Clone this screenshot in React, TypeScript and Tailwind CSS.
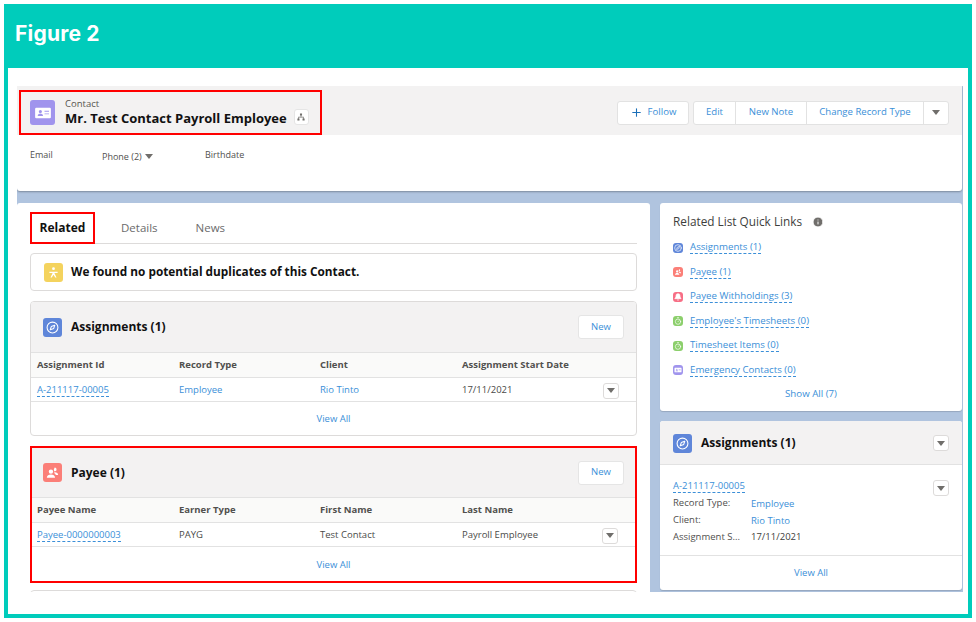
import React from "react";
import { Compass, Timer, Bell, Plus, Info } from "lucide-react";

const font = { fontFamily: '"Open Sans", "Noto Sans", sans-serif' };

function Caret({ className = "" }: { className?: string }) {
  return (
    <svg viewBox="0 0 10 6" className={`w-[8px] h-[5px] ${className}`}>
      <path d="M0 0h10L5 6z" fill="#706e6b" />
    </svg>
  );
}

function IdCard({ className = "" }: { className?: string }) {
  return (
    <svg viewBox="0 0 24 24" className={className}>
      <path fillRule="evenodd" fill="white" d="M3 5h18a1.500 1.500 0 011.500 1.500v11a1.500 1.500 0 01-1.500 1.500H3a1.500 1.500 0 01-1.500-1.500v-11A1.500 1.500 0 013 5zm5.500 3a2 2 0 100 4.200 2 2 0 000-4.200zM5 15.500c0-1.500 1.600-2.400 3.500-2.400s3.500.9 3.500 2.400v.5H5zM14 9v1.300h6V9zm0 3.500v1.300h6v-1.300z" />
    </svg>
  );
}

function PeopleIcon({ className = "" }: { className?: string }) {
  return (
    <svg viewBox="0 0 24 24" className={className}>
      <path fill="white" d="M9.500 7a3.500 3.500 0 110 7 3.500 3.500 0 010-7zM3 20c0-3 3-4.800 6.500-4.800S16 17 16 20v.5H3zM15.500 4a3 3 0 110 6c-.4 0-.8-.1-1.100-.2.2-.9.100-1.900-.3-2.700.5-.9.900-2 1.400-3.100zM16 11.500c2.800 0 5 1.500 5 4v.5h-3.600c-.6-1.500-1.800-2.700-3.400-3.500.5-.4 1.200-1 2-1z" />
    </svg>
  );
}

function IconBox({ color, size, children }: { color: string; size: string; children: React.ReactNode }) {
  return <span className={`${color} ${size} rounded-[3px] flex items-center justify-center shrink-0 text-white`}>{children}</span>;
}

function DropBtn({ size = "w-[16px] h-[16px]" }: { size?: string }) {
  return (
    <span className={`${size} bg-white border border-[#dddbda] rounded-[3px] flex items-center justify-center shrink-0`}>
      <Caret />
    </span>
  );
}

function Link({ children, className = "" }: { children: React.ReactNode; className?: string }) {
  return <span className={`text-[#3b8fd8] border-b border-dashed border-[#3b8fd8] leading-[12px] whitespace-nowrap ${className}`}>{children}</span>;
}

function Related({
  title,
  icon,
  color,
  heads,
  cells,
  cols,
  firstPad,
  barPad,
  headH,
  outer,
  barH,
  rowH,
}: {
  title: string;
  icon: React.ReactNode;
  color: string;
  heads: string[];
  cells: React.ReactNode[];
  cols: string;
  firstPad: string;
  barPad: string;
  headH: string;
  outer: string;
  barH: string;
  rowH: string;
}) {
  return (
    <section className={`bg-white flex flex-col ${outer}`}>
      <div className={`bg-[#f3f2f2] flex items-center justify-between ${barPad} ${barH}`}>
        <div className="flex items-center gap-[9px]">
          <IconBox color={color} size="w-[19px] h-[19px]">{icon}</IconBox>
          <span className="text-[12px] font-bold text-[#111]">{title}</span>
        </div>
        <span className="w-[46px] h-[24px] bg-white border border-[#e5e5e5] rounded-[3px] flex items-center justify-center text-[9.5px] text-[#3b8fd8]">New</span>
      </div>
      <div className={`grid ${cols} items-center bg-[#fafaf9] border-y border-[#e2e2e2] text-[9.5px] font-bold text-[#51504e] ${headH}`}>
        {heads.map((h, i) => (
          <span key={h} className={i === 0 ? firstPad : ""}>{h}</span>
        ))}
      </div>
      <div className={`grid ${cols} items-center border-b border-[#e2e2e2] text-[9.5px] text-[#4a4a48] pt-[2px] ${rowH}`}>
        {cells.map((c, i) => (
          <span key={i} className={i === 0 ? firstPad : i === 3 ? "flex items-center justify-between pr-[17px]" : ""}>
            {c}
            {i === 3 && <DropBtn />}
          </span>
        ))}
      </div>
      <div className="flex-1 flex items-center justify-center pt-[2px] text-[9.5px] text-[#3b8fd8]">View All</div>
    </section>
  );
}

const quick = [
  { t: "Assignments (1)", c: "bg-[#5f86d9]", i: <Compass size={8} /> },
  { t: "Payee (1)", c: "bg-[#fb7f78]", i: <PeopleIcon className="w-[8px] h-[8px]" /> },
  { t: "Payee Withholdings (3)", c: "bg-[#f76e85]", i: <Bell size={8} fill="white" /> },
  { t: "Employee's Timesheets (0)", c: "bg-[#8ccf6c]", i: <Timer size={8} /> },
  { t: "Timesheet Items (0)", c: "bg-[#8ccf6c]", i: <Timer size={8} /> },
  { t: "Emergency Contacts (0)", c: "bg-[#a094ed]", i: <IdCard className="w-[8px] h-[8px]" /> },
];

export default function App() {
  return (
    <div className="w-[976px] h-[622px] bg-white p-1 overflow-hidden" style={font}>
      <div className="w-[968px] h-[614px] flex flex-col">
        <header className="h-[64px] bg-[#00ccbb] flex items-center pl-[11px] pb-[4px]">
          <h1 className="text-[21px] font-bold text-white tracking-[0.2px]" style={{ fontFamily: 'Inter, "Open Sans", sans-serif' }}>Figure 2</h1>
        </header>
        <div className="flex-1 min-h-0 border-x-4 border-b-4 border-[#00ccbb] bg-white pl-[9px] pt-[18px]">
          <div className="w-[946px] h-[506px] bg-[#b0c4df] flex flex-col overflow-hidden">
            <div className="h-[105px] w-[945px] bg-white shadow-[0_1px_2px_rgba(0,0,0,0.3)] shrink-0 rounded-b-[3px]">
              <div className="h-[49px] bg-[#f3f2f2] flex items-center justify-between pr-[13px] pl-[2px] pt-[4px]">
                <div className="w-[303px] h-[45px] border-2 border-[#ff0000] flex items-center pl-[9px] whitespace-nowrap">
                  <IconBox color="bg-[#a094ed]" size="w-[25px] h-[25px]"><IdCard className="w-[18px] h-[18px]" /></IconBox>
                  <div className="ml-[10px] flex flex-col -mt-[2px]">
                    <span className="text-[9.5px] leading-[12px] text-[#56544f]">Contact</span>
                    <span className="text-[13px] leading-[16px] font-bold text-[#111]">Mr. Test Contact Payroll Employee</span>
                  </div>
                  <span className="ml-[7px] mt-[8px] w-[15px] h-[16px] bg-white border border-[#e5e5e5] rounded-[3px] flex items-center justify-center shrink-0">
                    <svg viewBox="0 0 10 10" className="w-[8px] h-[8px]">
                      <path d="M3.700 0.500h2.600v2.600h-2.600zM0.500 6.900h2.600v2.600h-2.600zM6.900 6.900h2.600v2.600h-2.600zM4.600 3.100h.8v1.600h3v2.200h-.8v-1.400h-5.200v1.400h-.8v-2.200h3z" fill="#706e6b" />
                    </svg>
                  </span>
                </div>
                <div className="flex items-center gap-[4px] text-[9.6px] text-[#3b8fd8]">
                  <span className="w-[72px] h-[24px] bg-white border border-[#e2e2e2] rounded-[3px] flex items-center justify-center gap-[5px]">
                    <Plus size={13} className="text-[#1b6fb8]" />Follow
                  </span>
                  <span className="h-[24px] bg-white border border-[#e2e2e2] rounded-[3px] flex items-center divide-x divide-[#e2e2e2]">
                    <span className="w-[42px] h-full flex items-center justify-center">Edit</span>
                    <span className="w-[71px] h-full flex items-center justify-center">New Note</span>
                    <span className="w-[117px] h-full flex items-center justify-center">Change Record Type</span>
                    <span className="w-[24px] h-full flex items-center justify-center"><Caret /></span>
                  </span>
                </div>
              </div>
              <div className="flex pl-[13px] pt-[13px] text-[9px] text-[#51504e] items-start">
                <span className="w-[72px]">Email</span>
                <span className="w-[103px] mt-[2px] flex items-center gap-[3px]">Phone (2) <Caret /></span>
                <span>Birthdate</span>
              </div>
            </div>
            <div className="flex gap-[10px] mt-[12px] min-h-0 flex-1 items-start">
              <main className="w-[633px] h-[400px] bg-white rounded-t-[3px] px-[13px] pt-[9px] flex flex-col shrink-0">
                <div className="flex items-center h-[32px] border-b border-[#dddbda] text-[11.5px] text-[#6b6b6b] shrink-0">
                  <span className="w-[65px] h-[32px] border-2 border-[#ff0000] flex items-center justify-center font-bold text-[#111] text-[12px]">Related</span>
                  <span className="ml-[26px]">Details</span>
                  <span className="ml-[38px]">News</span>
                </div>
                <div className="mt-[9px] h-[38px] border border-[#dddbda] rounded-[4px] flex items-center pl-[13px] gap-[8px] shrink-0">
                  <IconBox color="bg-[#f4d35e]" size="w-[19px] h-[19px]">
                    <svg viewBox="0 0 12 12" className="w-[13px] h-[13px]"><path d="M6 1.200a1.300 1.300 0 110 2.600 1.300 1.300 0 010-2.600zM2.200 5.400h7.600v1H6.800l2 4.200H7.600L6 8 4.400 10.600H3.200l2-4.200h-3z" fill="white" /></svg>
                  </IconBox>
                  <span className="text-[11.8px] font-bold text-[#111]">We found no potential duplicates of this Contact.</span>
                </div>
                <Related
                  outer="mt-[10px] h-[135px] border border-[#dddbda] rounded-[4px] overflow-hidden shrink-0"
                  cols="grid-cols-[148px_141px_142px_1fr]"
                  firstPad="pl-[6px]"
                  barPad="pl-[12px] pr-[12px]"
                  barH="h-[50px]"
                  headH="h-[26px]"
                  rowH="h-[24px]"
                  title="Assignments (1)"
                  color="bg-[#5f86d9]"
                  icon={<Compass size={13} />}
                  heads={["Assignment Id", "Record Type", "Client", "Assignment Start Date"]}
                  cells={[<Link>A-211117-00005</Link>, <span className="text-[#3b8fd8]">Employee</span>, <span className="text-[#3b8fd8]">Rio Tinto</span>, "17/11/2021"]}
                />
                <Related
                  outer="mt-[10px] h-[137px] border-2 border-[#ff0000] shrink-0"
                  cols="grid-cols-[147px_141px_142px_1fr]"
                  firstPad="pl-[5px]"
                  barPad="pl-[11px] pr-[11px]"
                  barH="h-[49px]"
                  headH="h-[26px]"
                  rowH="h-[24px]"
                  title="Payee (1)"
                  color="bg-[#fb7f78]"
                  icon={<PeopleIcon className="w-[15px] h-[15px]" />}
                  heads={["Payee Name", "Earner Type", "First Name", "Last Name"]}
                  cells={[<Link>Payee-0000000003</Link>, "PAYG", "Test Contact", "Payroll Employee"]}
                />
                <div className="mt-[7px] h-[10px] border border-[#dddbda] rounded-t-[4px] shrink-0" />
              </main>
              <aside className="w-[302px] flex flex-col gap-[10px] shrink-0">
                <section className="h-[208px] bg-white rounded-[3px] shadow-[0_1px_1px_rgba(0,0,0,0.15)] pl-[13px] pt-[10px] flex flex-col">
                  <div className="flex items-center gap-[10px] text-[11.8px] text-[#3e3e3c] h-[18px]">
                    Related List Quick Links
                    <Info size={12} className="text-white" fill="#706e6b" />
                  </div>
                  <ul className="mt-[8px] flex flex-col gap-[7.5px] text-[9.7px]">
                    {quick.map((q) => (
                      <li key={q.t} className="flex items-center gap-[7px] h-[17px]">
                        <IconBox color={q.c} size="w-[10px] h-[10px]">{q.i}</IconBox>
                        <Link>{q.t}</Link>
                      </li>
                    ))}
                  </ul>
                  <div className="mt-[8px] -ml-[13px] text-center text-[9.7px] text-[#3b8fd8]">Show All (7)</div>
                </section>
                <section className="h-[169px] bg-white rounded-[3px] flex flex-col overflow-hidden shadow-[0_1px_1px_rgba(0,0,0,0.15)]">
                  <div className="h-[44px] bg-[#f3f2f2] border-b border-[#e2e2e2] flex items-center justify-between pl-[13px] pr-[13px] pt-[1px] shrink-0">
                    <div className="flex items-center gap-[9px]">
                      <IconBox color="bg-[#5f86d9]" size="w-[19px] h-[19px]"><Compass size={13} /></IconBox>
                      <span className="text-[12px] font-bold text-[#111]">Assignments (1)</span>
                    </div>
                    <DropBtn />
                  </div>
                  <div className="flex-1 pl-[13px] pr-[13px] pt-[15px] text-[9.5px] text-[#51504e]">
                    <div className="flex items-start justify-between h-[15px]">
                      <Link>A-211117-00005</Link>
                      <DropBtn />
                    </div>
                    <div className="grid grid-cols-[78px_1fr] leading-[15px] gap-y-[1px]">
                      <span>Record Type:</span><span className="text-[#3b8fd8] mt-[1px]">Employee</span>
                      <span>Client:</span><span className="text-[#3b8fd8] mt-[1px]">Rio Tinto</span>
                      <span>Assignment S...</span><span className="text-[#3e3e3c]">17/11/2021</span>
                    </div>
                  </div>
                  <div className="h-[35px] border-t border-[#e2e2e2] flex items-center justify-center pt-[1px] text-[9.5px] text-[#3b8fd8] shrink-0">View All</div>
                </section>
              </aside>
            </div>
          </div>
        </div>
      </div>
    </div>
  );
}
